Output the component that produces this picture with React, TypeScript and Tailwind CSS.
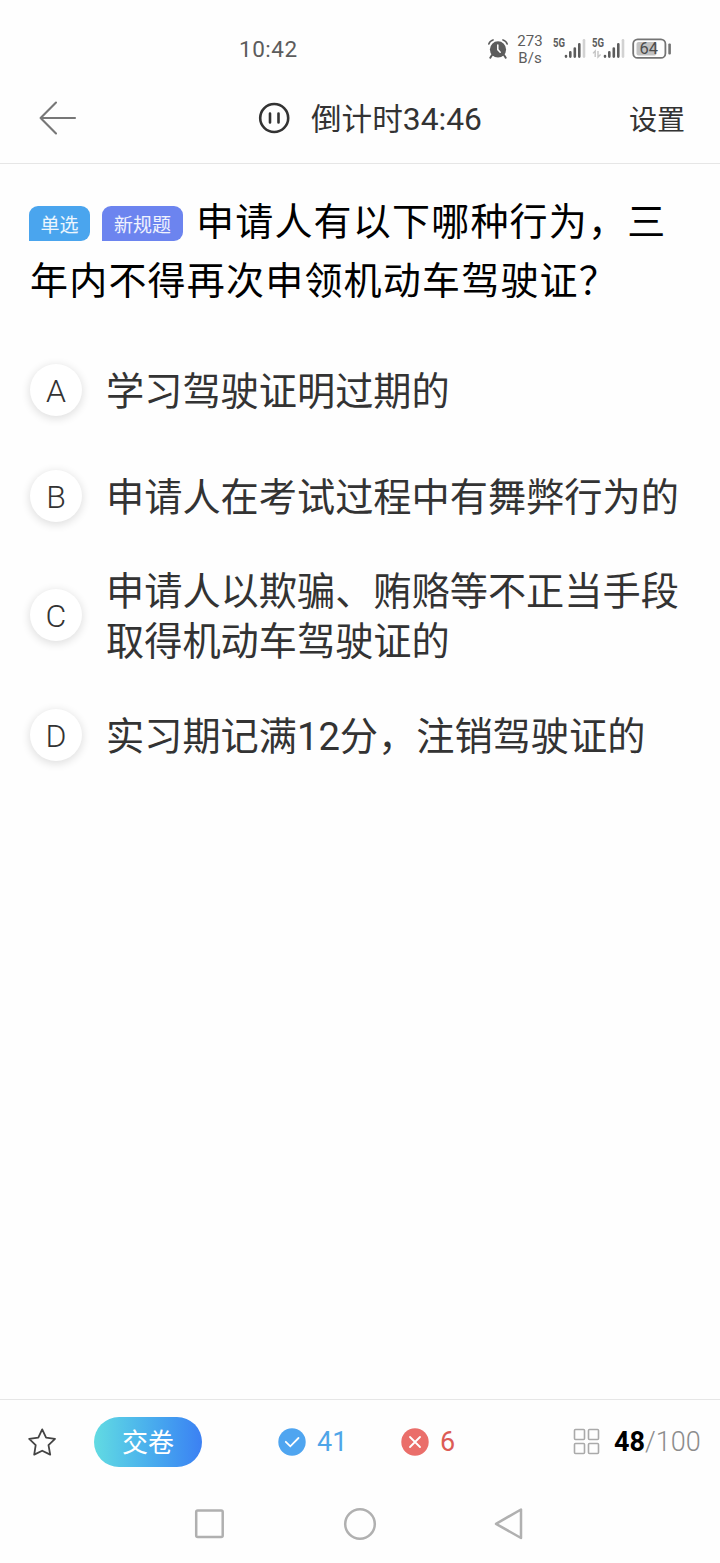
const options = [
  { id: "A", lines: ["学习驾驶证明过期的"] },
  { id: "B", lines: ["申请人在考试过程中有舞弊行为的"] },
  { id: "C", lines: ["申请人以欺骗、贿赂等不正当手段", "取得机动车驾驶证的"] },
  { id: "D", lines: ["实习期记满12分，注销驾驶证的"] },
];

function AlarmIcon() {
  return (
    <svg width="20" height="20" viewBox="0 0 20 20" className="shrink-0">
      <circle cx="10" cy="10.4" r="8.1" fill="#5c5c5c" />
      <g fill="none" stroke="#5c5c5c" strokeLinecap="round">
        <path d="M.8 5Q1.8 1.8 5 .9M19.2 5Q18.2 1.8 15 .9" strokeWidth="1.6" />
        <path d="M4 16l-1.7 2.7M16 16l1.7 2.7" strokeWidth="2" />
      </g>
      <path
        d="M9.8 6v4.6l2.4 2.6"
        fill="none"
        stroke="#fff"
        strokeWidth="1.5"
        strokeLinecap="round"
      />
    </svg>
  );
}

function SignalIcon({ data = false }: { data?: boolean }) {
  return (
    <svg width="33" height="26" viewBox="0 -4 33 26" className="-mt-1 shrink-0 overflow-visible">
      <text
        x="0"
        y="9"
        fontSize="12"
        fontWeight="700"
        textLength="12"
        lengthAdjust="spacingAndGlyphs"
        fill="#5c5c5c"
      >
        5G
      </text>
      {data && (
        <g stroke="#c4c4c4" strokeWidth="1.4" fill="none">
          <path d="M3.2 19v-6l-2.2 2.4M6 13v6l2.6-2.6" />
        </g>
      )}
      <g strokeWidth="2.6" strokeLinecap="round" stroke="#5c5c5c">
        <path d="M13 18v.6M17.3 14.3v4.3M21.8 10.5v8.1M26.3 6.3v12.3" />
        <path d="M31 2.2v16.4" stroke="#d2d2d2" />
      </g>
    </svg>
  );
}

function BatteryIcon() {
  return (
    <svg width="40" height="22" viewBox="0 0 40 22" className="shrink-0">
      <rect x="4.5" y="4" width="20" height="13.5" rx="2" fill="#c2c2c2" />
      <rect
        x="1.2"
        y="1.3"
        width="32.2"
        height="18.6"
        rx="4.5"
        fill="none"
        stroke="#747474"
        strokeWidth="1.8"
      />
      <rect x="36.3" y="5.5" width="2.6" height="11" rx="1" fill="#747474" />
      <text
        x="7.4"
        y="16.4"
        fontSize="16.5"
        textLength="18.5"
        lengthAdjust="spacingAndGlyphs"
        fill="#4c4c4c"
      >
        64
      </text>
    </svg>
  );
}

function StatusBar() {
  return (
    <div className="flex h-[74px] items-center pt-6 pl-[239px] text-[#5c5c5c]">
      <span className="w-[249px] text-[22.5px] leading-[28px] tracking-[0.5px]">
        10:42
      </span>
      <AlarmIcon />
      <div className="ml-[9px] w-[26px] pt-px text-center text-[15px] leading-[17px]">
        <div>273</div>
        <div>B/s</div>
      </div>
      <div className="ml-[10px] flex items-center gap-[6px]">
        <SignalIcon />
        <SignalIcon data />
      </div>
      <div className="ml-[7px]">
        <BatteryIcon />
      </div>
    </div>
  );
}

function Header() {
  return (
    <header className="flex h-[90px] items-center border-b border-[#e6e6e6] pr-[35px] pb-px pl-[39px] text-[#333]">
      <svg width="38" height="34" viewBox="0 0 38 34">
        <path
          d="M17 1.5L1.6 17 17 32.5M1.6 17H36"
          fill="none"
          stroke="#777"
          strokeWidth="2.1"
          strokeLinecap="round"
          strokeLinejoin="round"
        />
      </svg>
      <div className="ml-[181px] flex items-center">
        <svg width="32" height="32" viewBox="0 0 32 32">
          <circle cx="16.2" cy="16" r="14" fill="none" stroke="#333" strokeWidth="2.6" />
          <path
            d="M12 11.5v9M20.5 11.5v9"
            stroke="#333"
            strokeWidth="2.6"
            strokeLinecap="round"
          />
        </svg>
        <h1 className="ml-[21px] pt-[2px] text-[30.6px] leading-[40px] whitespace-nowrap">
          倒计时<span className="text-[31.8px]">34:46</span>
        </h1>
      </div>
      <button className="ml-auto pt-[6px] text-[28px] leading-[40px]">设置</button>
    </header>
  );
}

function Question() {
  return (
    <h2 className="mt-[28px] pl-[29px] text-[38px] leading-[59px] tracking-[1.2px] whitespace-nowrap text-black">
      <div className="flex h-[59px] items-center">
        <span className="mt-[3px] h-[35px] w-[61px] rounded-[9px] rounded-bl-none bg-[#4aa5ee] text-center text-[19px] leading-[39px] tracking-normal text-white/90">
          单选
        </span>
        <span className="mt-[3px] ml-[12px] h-[35px] w-[81px] rounded-[9px] rounded-bl-none bg-[#6c84ef] text-center text-[19px] leading-[39px] tracking-normal text-white/90">
          新规题
        </span>
        <span className="ml-[13px] pt-px">申请人有以下哪种行为，三</span>
      </div>
      <div className="pt-px pl-px">
        年内不得再次申领机动车驾驶证？
      </div>
    </h2>
  );
}

function Options() {
  return (
    <ul className="mt-[43px] flex flex-col gap-[33.5px] pl-[30px] text-[#333]">
      {options.map((option) => (
        <li key={option.id} className="flex min-h-[72px] items-center">
          <span className="flex size-[52px] shrink-0 items-center justify-center rounded-full bg-white pt-[2px] text-[32px] font-light shadow-[0_2px_8px_1px_rgba(0,0,0,0.12)]">
            {option.id}
          </span>
          <div className="-mb-[2px] ml-6 pt-[2px] text-[38.2px] leading-[50px] whitespace-nowrap">
            {option.lines.map((line) => (
              <p key={line}>{line}</p>
            ))}
          </div>
        </li>
      ))}
    </ul>
  );
}

function Toolbar() {
  return (
    <div className="flex h-[86px] items-center border-t border-[#e6e6e6] pb-[2px] pl-[28px] text-[27px] leading-[36px]">
      <svg width="28" height="28" viewBox="0 0 28 28">
        <path
          d="M14.2 1.4l3.9 8.3 8.9 1.2-6.5 6.3 1.7 9.4-8-3.9-8 3.9 1.5-9.4-6.5-6.3 9.1-1.2z"
          fill="none"
          stroke="#444"
          strokeWidth="1.8"
          strokeLinejoin="round"
        />
      </svg>
      <button className="ml-[38px] h-[50px] w-[108px] rounded-full bg-linear-to-r from-[#62dbe2] to-[#3c80f3] pt-[3px] text-[26px] text-white">
        交卷
      </button>
      <svg width="28" height="28" viewBox="0 0 28 28" className="ml-[76px]">
        <circle cx="14" cy="14" r="13.7" fill="#4fa5f0" />
        <path
          d="M7.8 13.8l4.5 4.5 8.2-8.3"
          fill="none"
          stroke="#fff"
          strokeWidth="1.8"
          strokeLinecap="round"
        />
      </svg>
      <span className="ml-[11px] w-[84px] text-[#4fa5e8]">41</span>
      <svg width="28" height="28" viewBox="0 0 28 28">
        <circle cx="14" cy="14" r="13.7" fill="#ea6e6a" />
        <path
          d="M9 9l10 10M19 9L9 19"
          stroke="#fff"
          strokeWidth="1.8"
          strokeLinecap="round"
        />
      </svg>
      <span className="ml-[11px] w-[133px] text-[#dc5b55]">6</span>
      <svg width="27" height="27" viewBox="0 0 27 27">
        <g fill="none" stroke="#aaa" strokeWidth="1.6">
          <rect x="1.5" y="1.5" width="10" height="10" rx="1" />
          <rect x="15.5" y="1.5" width="10" height="10" rx="1" />
          <rect x="1.5" y="15.5" width="10" height="10" rx="1" />
          <rect x="15.5" y="15.5" width="10" height="10" rx="1" />
        </g>
      </svg>
      <span className="ml-[14px] text-[#8c8c8c]">
        <b className="text-black">48</b>
        <span className="font-light">/100</span>
      </span>
    </div>
  );
}

function NavBar() {
  return (
    <nav className="flex h-[78px] items-center pl-[194px]">
      <svg width="330" height="34" viewBox="0 0 330 34" fill="none" stroke="#b0b0b0" strokeWidth="2.5">
        <rect x="2.2" y="3.5" width="26.5" height="26.5" rx="1.5" />
        <circle cx="166" cy="17" r="14.8" />
        <path d="M327 2.500v28.500L302 16.800z" strokeLinejoin="round" />
      </svg>
    </nav>
  );
}

export default function App() {
  return (
    <div className="flex h-[1563px] w-[720px] flex-col overflow-hidden bg-[#fefefe] font-['Roboto','Noto_Sans_CJK_SC',sans-serif]">
      <StatusBar />
      <Header />
      <main className="flex-1">
        <Question />
        <Options />
      </main>
      <Toolbar />
      <NavBar />
    </div>
  );
}
